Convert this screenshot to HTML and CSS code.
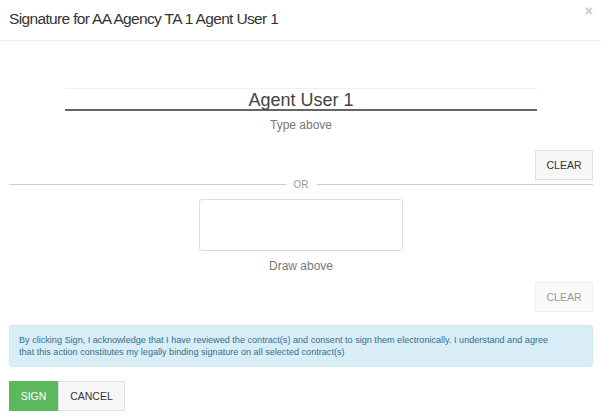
FILE: index.html
```html
<!DOCTYPE html>
<html>
<head>
<meta charset="utf-8">
<link rel="stylesheet" href="styles.css">
</head>
<body>
<div class="modal">
  <div class="modal-header">
    <h4 class="modal-title">Signature for AA Agency TA 1 Agent User 1</h4>
    <span class="close">×</span>
  </div>
  <div class="modal-body">
    <div class="typed">
      <div class="typed-input">Agent User 1</div>
      <div class="caption">Type above</div>
    </div>
    <div class="btn-row first">
      <button class="btn btn-default">CLEAR</button>
    </div>
    <div class="divider"><span>OR</span></div>
    <div class="draw">
      <div class="canvas"></div>
      <div class="caption">Draw above</div>
    </div>
    <div class="btn-row second">
      <button class="btn btn-default disabled">CLEAR</button>
    </div>
    <div class="alert">By clicking Sign, I acknowledge that I have reviewed the contract(s) and consent to sign them electronically. I understand and agree that this action constitutes my legally binding signature on all selected contract(s)</div>
    <div class="actions">
      <button class="btn btn-success">SIGN</button><button class="btn btn-default">CANCEL</button>
    </div>
  </div>
</div>
</body>
</html>
```
FILE: styles.css
```css
* { box-sizing: border-box; }
html, body { margin: 0; padding: 0; background: #fff; }
body { font-family: "Liberation Sans", Arial, sans-serif; color: #333; width: 601px; height: 416px; overflow: hidden; }
.modal-header { position: relative; height: 41px; border-bottom: 1px solid #eeeeee; padding: 8px 9px 0; }
.modal-title { margin: 0; font-weight: normal; font-size: 15.5px; letter-spacing: -0.65px; line-height: 22px; color: #333; }
.close { position: absolute; right: 8px; top: 3px; font-size: 14px; color: #c8c8c8; font-weight: bold; }
.modal-body { padding: 0 8px 0 9px; }
.typed { display: flex; flex-direction: column; align-items: center; padding-top: 47px; }
.typed-input { width: 472px; height: 23px; border-top: 1px solid #f0f0f0; border-bottom: 2px solid #666; text-align: center; font-size: 18px; line-height: 20px; padding-top: 1px; color: #444; }
.caption { font-size: 12px; color: #777; margin-top: 7px; line-height: 15px; }
.btn-row { display: flex; justify-content: flex-end; }
.btn-row.first { margin-top: 17px; }
.btn-row.second { margin-top: 8px; }
.btn { font-family: "Liberation Sans", Arial, sans-serif; font-size: 10.5px; height: 30px; padding: 0 10px; border: 1px solid #e0e0e0; background: #f7f7f7; color: #333; border-radius: 0; margin: 0; }
.btn-row .btn { width: 58px; padding: 0; }
.btn.disabled { color: #999; background: #fafafa; border-color: #eee; }
.divider { display: flex; align-items: center; gap: 8px; margin-top: -1px; font-size: 10px; color: #999; height: 10px; }
.divider::before, .divider::after { content: ""; flex: 1; height: 1px; background: #ccc; }
.draw { display: flex; flex-direction: column; align-items: center; margin-top: 10px; }
.canvas { width: 204px; height: 52px; border: 1px solid #ddd; border-radius: 3px; }
.draw .caption { margin-top: 8px; }
.alert { margin-top: 13px; background: #d9edf7; border: 1px solid #d1e7f3; border-radius: 3px; color: #31708f; font-size: 9.1px; line-height: 12px; padding: 8px 34px 8px 9px; }
.actions { margin-top: 14px; display: flex; }
.btn-success { background: #5cb85c; border-color: #5cb85c; color: #fff; width: 49px; padding: 0; }
.actions .btn-default { width: 67px; padding: 0; }
```
